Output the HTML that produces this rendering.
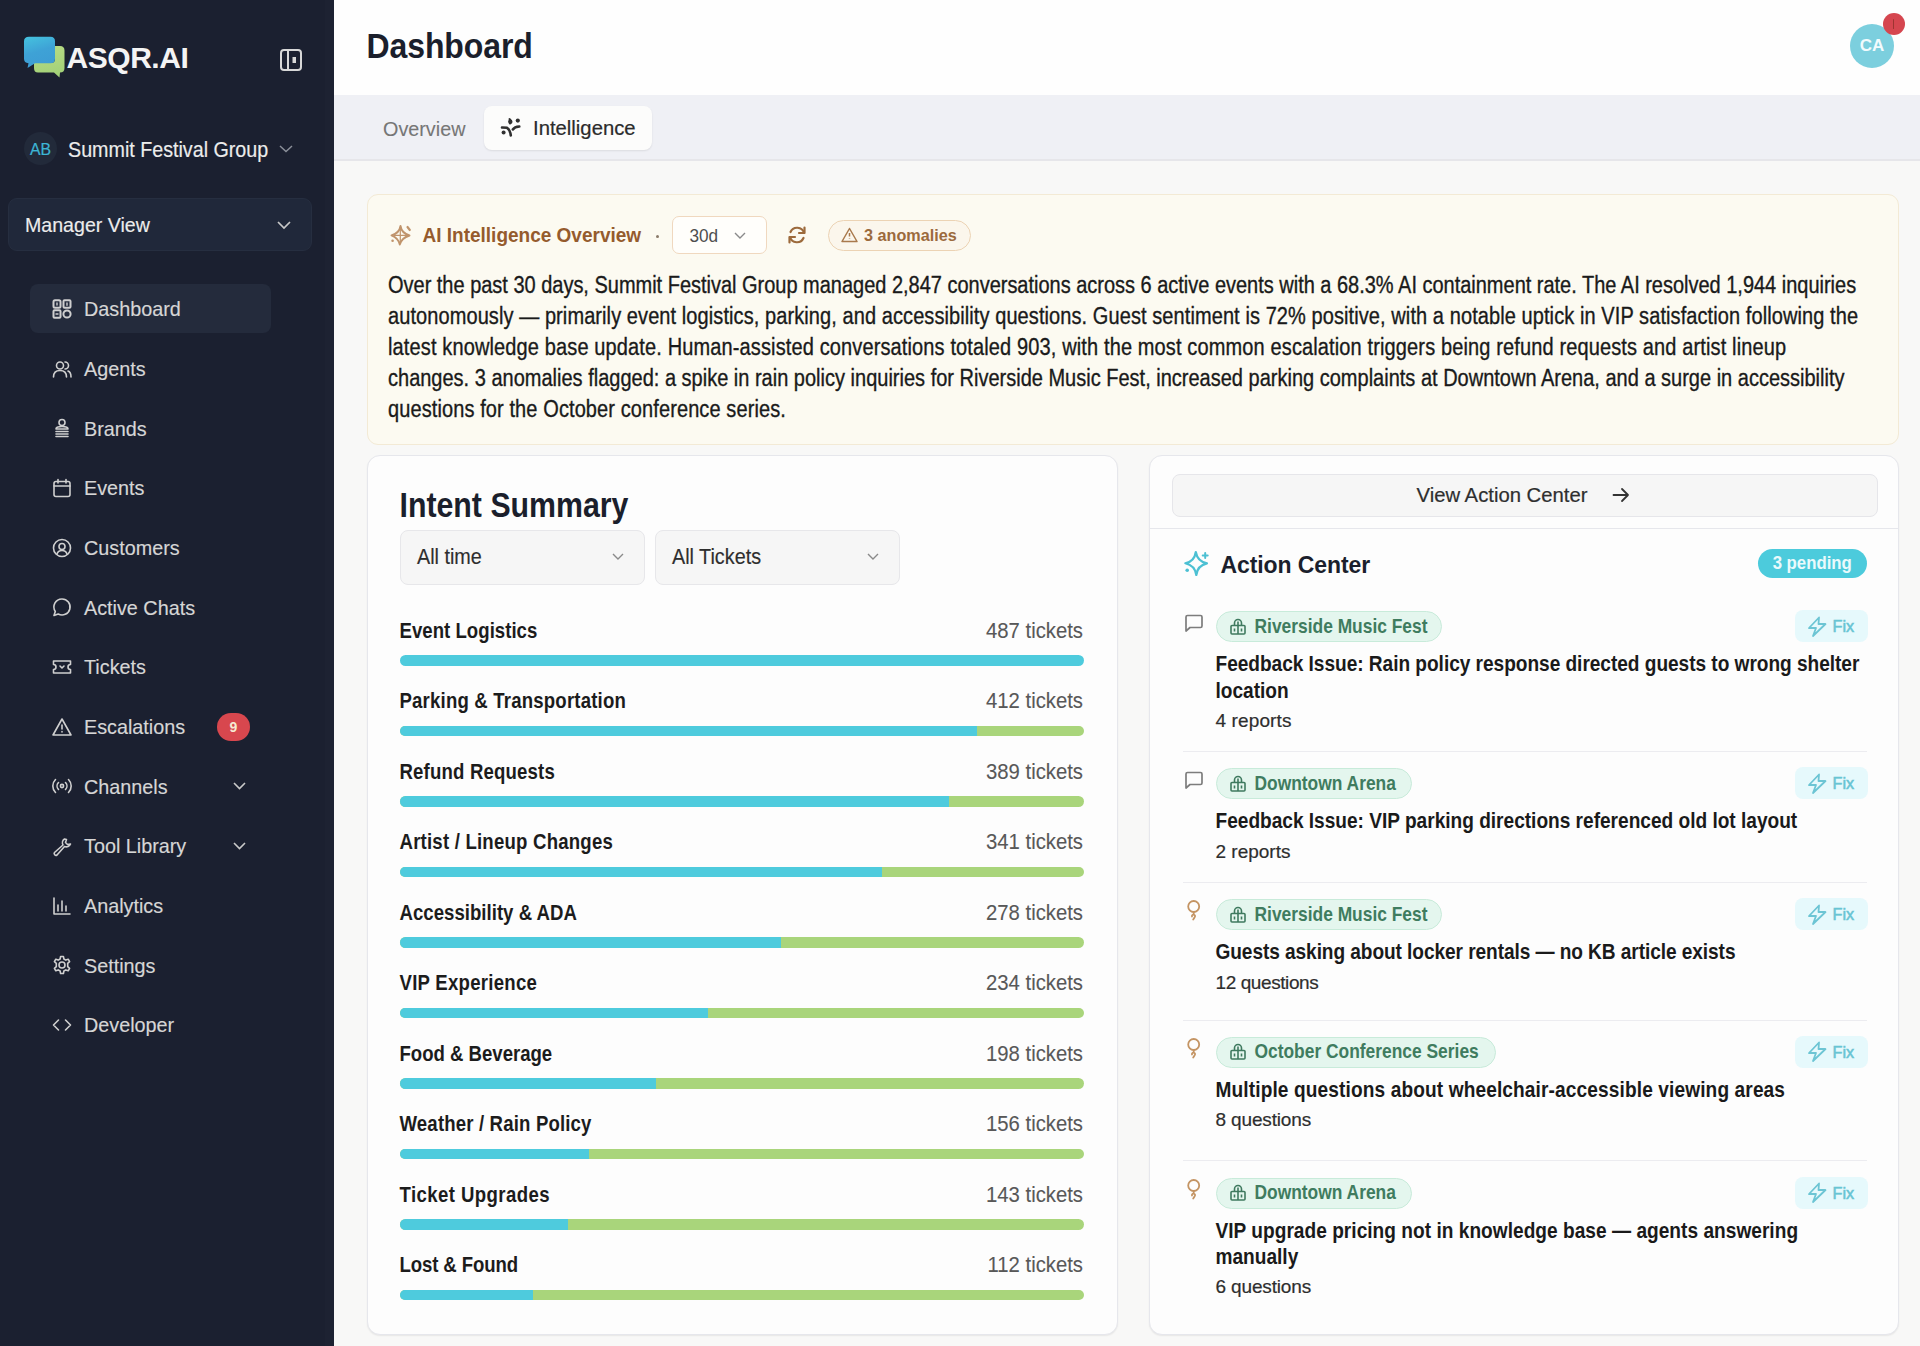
<!DOCTYPE html>
<html><head><meta charset="utf-8">
<style>
*{box-sizing:border-box;margin:0;padding:0}
html,body{width:1920px;height:1346px;overflow:hidden;background:#f8f8f7;font-family:"Liberation Sans",sans-serif}
.abs{position:absolute}
.t{position:absolute;white-space:nowrap}
svg{position:absolute;overflow:visible}
.nico{stroke:#cfcfcf;fill:none;stroke-width:1.6;stroke-linecap:round;stroke-linejoin:round}
</style></head><body>
<div class="abs" style="left:0px;top:0px;width:334px;height:1346px;background:#1b2030;border-radius:0px;"></div>
<div class="abs" style="left:325px;top:0px;width:9px;height:1346px;background:#1d2232;border-radius:0px;"></div>
<svg style="left:0;top:0" width="334" height="100">
  <defs><linearGradient id="gb" x1="0" y1="0" x2="0.3" y2="1"><stop offset="0" stop-color="#45c3df"/><stop offset="0.55" stop-color="#3ea2d6"/><stop offset="1" stop-color="#3d9dd4"/></linearGradient>
  <linearGradient id="gg" x1="0" y1="0" x2="0.2" y2="1"><stop offset="0" stop-color="#b9dc86"/><stop offset="1" stop-color="#a3d178"/></linearGradient></defs>
  <path d="M55 46 H60 Q64.5 46 64.5 50.5 V68 Q64.5 72.5 60 72.5 L59.5 77.5 L54 72.5 H38 Q34 72.5 34 68 V63 H51 Q55 63 55 59 Z" fill="url(#gg)"/>
  <path d="M29 36.8 H50.5 Q55 36.8 55 41.3 V58.8 Q55 63.3 50.5 63.3 H35 L27.5 68 L28.5 63.3 Q24 63 24 58.8 V41.3 Q24 36.8 29 36.8 Z" fill="url(#gb)"/>
</svg>
<div class="t" style="left:66.50px;top:42.90px;font-size:30px;color:#f4f4f4;line-height:30px;height:30px;font-weight:700;letter-spacing:-0.45px;">ASQR.AI</div>
<svg style="left:280px;top:49px" width="22" height="22" viewBox="0 0 22 22"><rect x="1" y="1" width="20" height="20" rx="3" fill="none" stroke="#d8d8d8" stroke-width="2"/><line x1="8" y1="1" x2="8" y2="21" stroke="#d8d8d8" stroke-width="2"/><rect x="12.5" y="8" width="3.5" height="6" fill="#d8d8d8"/></svg>
<div class="abs" style="left:24px;top:132px;width:33px;height:33px;background:#222a3a;border-radius:16.5px;"></div>
<div class="t" style="left:24.00px;top:134.52px;font-size:15.8px;color:#3db6d6;line-height:30px;height:30px;transform:scaleY(1.08);transform-origin:0 20.48px;width:33px;text-align:center;-webkit-text-stroke:0.2px #3db6d6;">AB</div>
<div class="t" style="left:68.00px;top:135.17px;font-size:19.7px;color:#ececec;line-height:30px;height:30px;transform:scaleY(1.09);transform-origin:0 21.83px;-webkit-text-stroke:0.15px #ececec;">Summit Festival Group</div>
<svg style="left:279px;top:145px" width="14" height="8" viewBox="0 0 14 8"><path d="M1 1 L7 6.5 L13 1" fill="none" stroke="#8b8f99" stroke-width="1.5"/></svg>
<div class="abs" style="left:8px;top:198px;width:304px;height:53px;background:#20283a;border-radius:9px;border:1px solid #262e40;"></div>
<div class="t" style="left:25.00px;top:210.20px;font-size:19.6px;color:#ececec;line-height:30px;height:30px;transform:scaleY(1.07);transform-origin:0 21.80px;-webkit-text-stroke:0.15px #ececec;">Manager View</div>
<svg style="left:277px;top:221px" width="14" height="8" viewBox="0 0 14 8"><path d="M1 1 L7 7 L13 1" fill="none" stroke="#c8c8c8" stroke-width="1.7"/></svg>
<div class="abs" style="left:30px;top:284px;width:241px;height:49px;background:#242b3c;border-radius:8px;"></div>
<svg class="nico" style="left:52px;top:299.0px" width="20" height="20" viewBox="0 0 20 20"><g stroke-width="2"><rect x="1.5" y="1.2" width="7" height="7.6" rx="1.5"/><rect x="11.5" y="1.2" width="7" height="7.6" rx="1"/><rect x="1.5" y="11.2" width="7" height="7.6" rx="1"/><circle cx="15" cy="15" r="3.6"/></g><path d="M5 4 V6 M15 4 V6.3 M4 15 H6" stroke-width="1.4"/></svg>
<div class="t" style="left:84.00px;top:294.39px;font-size:19.8px;color:#d6d6d6;line-height:30px;height:30px;-webkit-text-stroke:0.15px #d6d6d6;">Dashboard</div>
<svg class="nico" style="left:52px;top:358.7px" width="20" height="20" viewBox="0 0 20 20"><circle cx="8" cy="6.5" r="3.5"/><path d="M1.5 18 Q1.5 11.5 8 11.5 Q14.5 11.5 14.5 18"/><path d="M13 3 A3.5 3.5 0 0 1 13 10"/><path d="M16 12 Q19 13 19 18"/></svg>
<div class="t" style="left:84.00px;top:354.06px;font-size:19.8px;color:#d6d6d6;line-height:30px;height:30px;-webkit-text-stroke:0.15px #d6d6d6;">Agents</div>
<svg class="nico" style="left:52px;top:418.3px" width="20" height="20" viewBox="0 0 20 20"><circle cx="10" cy="4.5" r="3"/><path d="M4 11 Q4 8.5 10 8.5 Q16 8.5 16 11 Z"/><path d="M4 13.5 H16 M4 16 H16 M4 18.5 H16"/></svg>
<div class="t" style="left:84.00px;top:413.73px;font-size:19.8px;color:#d6d6d6;line-height:30px;height:30px;-webkit-text-stroke:0.15px #d6d6d6;">Brands</div>
<svg class="nico" style="left:52px;top:478.0px" width="20" height="20" viewBox="0 0 20 20"><rect x="2" y="3.5" width="16" height="15" rx="2"/><path d="M2 8 H18 M6 1.5 V5 M14 1.5 V5"/></svg>
<div class="t" style="left:84.00px;top:473.40px;font-size:19.8px;color:#d6d6d6;line-height:30px;height:30px;-webkit-text-stroke:0.15px #d6d6d6;">Events</div>
<svg class="nico" style="left:52px;top:537.7px" width="20" height="20" viewBox="0 0 20 20"><circle cx="10" cy="10" r="8.5"/><circle cx="10" cy="8.5" r="3"/><path d="M5 16 Q6 12.5 10 12.5 Q14 12.5 15 16"/></svg>
<div class="t" style="left:84.00px;top:533.07px;font-size:19.8px;color:#d6d6d6;line-height:30px;height:30px;-webkit-text-stroke:0.15px #d6d6d6;">Customers</div>
<svg class="nico" style="left:52px;top:597.4px" width="20" height="20" viewBox="0 0 20 20"><path d="M10 2 A8 8 0 1 1 6.2 17 L2 18.5 L3.3 14.5 A8 8 0 0 1 10 2 Z"/></svg>
<div class="t" style="left:84.00px;top:592.74px;font-size:19.8px;color:#d6d6d6;line-height:30px;height:30px;-webkit-text-stroke:0.15px #d6d6d6;">Active Chats</div>
<svg class="nico" style="left:52px;top:657.0px" width="20" height="20" viewBox="0 0 20 20"><path d="M1.5 4 H18.5 V7.5 A2.5 2.5 0 0 0 18.5 12.5 V16 H1.5 V12.5 A2.5 2.5 0 0 0 1.5 7.5 Z"/><path d="M8 9 L10 11 L12 9"/></svg>
<div class="t" style="left:84.00px;top:652.41px;font-size:19.8px;color:#d6d6d6;line-height:30px;height:30px;-webkit-text-stroke:0.15px #d6d6d6;">Tickets</div>
<svg class="nico" style="left:52px;top:716.7px" width="20" height="20" viewBox="0 0 20 20"><path d="M10 2 L19 18 H1 Z"/><path d="M10 8 V12 M10 14.5 V15"/></svg>
<div class="t" style="left:84.00px;top:712.08px;font-size:19.8px;color:#d6d6d6;line-height:30px;height:30px;-webkit-text-stroke:0.15px #d6d6d6;">Escalations</div>
<div class="abs" style="left:217px;top:712.7px;width:33px;height:28.0px;background:#d8474e;border-radius:14px;"></div>
<div class="t" style="left:217.00px;top:711.84px;font-size:14px;color:#f6ead2;line-height:30px;height:30px;font-weight:700;width:33px;text-align:center;">9</div>
<svg class="nico" style="left:52px;top:776.4px" width="20" height="20" viewBox="0 0 20 20"><circle cx="10" cy="10" r="1.6"/><path d="M6.5 6.5 A5 5 0 0 0 6.5 13.5 M13.5 6.5 A5 5 0 0 1 13.5 13.5 M3.5 3.5 A9.2 9.2 0 0 0 3.5 16.5 M16.5 3.5 A9.2 9.2 0 0 1 16.5 16.5"/></svg>
<div class="t" style="left:84.00px;top:771.75px;font-size:19.8px;color:#d6d6d6;line-height:30px;height:30px;-webkit-text-stroke:0.15px #d6d6d6;">Channels</div>
<svg style="left:232.5px;top:782.4px" width="13" height="8" viewBox="0 0 13 8"><path d="M1 1 L6.5 6.5 L12 1" fill="none" stroke="#c9c9c9" stroke-width="1.6"/></svg>
<svg class="nico" style="left:52px;top:836.0px" width="20" height="20" viewBox="0 0 20 20"><path d="M12.5 3 A4.5 4.5 0 0 0 11 9 L2.5 16.5 A1.8 1.8 0 0 0 5 19 L12.5 10.5 A4.5 4.5 0 0 0 18.5 8 L15.5 8.5 L13.5 6.5 L14.5 3.5 Z"/></svg>
<div class="t" style="left:84.00px;top:831.42px;font-size:19.8px;color:#d6d6d6;line-height:30px;height:30px;-webkit-text-stroke:0.15px #d6d6d6;">Tool Library</div>
<svg style="left:232.5px;top:842.0px" width="13" height="8" viewBox="0 0 13 8"><path d="M1 1 L6.5 6.5 L12 1" fill="none" stroke="#c9c9c9" stroke-width="1.6"/></svg>
<svg class="nico" style="left:52px;top:895.7px" width="20" height="20" viewBox="0 0 20 20"><path d="M2 2 V18 H18 M6 15 V9 M10 15 V5 M14 15 V10"/></svg>
<div class="t" style="left:84.00px;top:891.09px;font-size:19.8px;color:#d6d6d6;line-height:30px;height:30px;-webkit-text-stroke:0.15px #d6d6d6;">Analytics</div>
<svg class="nico" style="left:52px;top:955.4px" width="20" height="20" viewBox="0 0 20 20"><circle cx="10" cy="10" r="3"/><path d="M8.6 1.5 H11.4 L11.9 4 L13.8 5.1 L16.2 4.2 L17.6 6.6 L15.7 8.3 V11.7 L17.6 13.4 L16.2 15.8 L13.8 14.9 L11.9 16 L11.4 18.5 H8.6 L8.1 16 L6.2 14.9 L3.8 15.8 L2.4 13.4 L4.3 11.7 V8.3 L2.4 6.6 L3.8 4.2 L6.2 5.1 L8.1 4 Z"/></svg>
<div class="t" style="left:84.00px;top:950.76px;font-size:19.8px;color:#d6d6d6;line-height:30px;height:30px;-webkit-text-stroke:0.15px #d6d6d6;">Settings</div>
<svg class="nico" style="left:52px;top:1015.0px" width="20" height="20" viewBox="0 0 20 20"><path d="M6.5 5 L1.5 10 L6.5 15 M13.5 5 L18.5 10 L13.5 15"/></svg>
<div class="t" style="left:84.00px;top:1010.43px;font-size:19.8px;color:#d6d6d6;line-height:30px;height:30px;-webkit-text-stroke:0.15px #d6d6d6;">Developer</div>
<div class="abs" style="left:334px;top:0px;width:1586px;height:95px;background:#fefefe;border-radius:0px;"></div>
<div class="t" style="left:366.50px;top:31.91px;font-size:32px;color:#1b1f2c;line-height:30px;height:30px;font-weight:700;letter-spacing:-0.1px;transform:scaleY(1.08);transform-origin:0 26.09px;">Dashboard</div>
<div class="abs" style="left:1850px;top:23.5px;width:44px;height:44.0px;background:#7ccfde;border-radius:22px;"></div>
<div class="t" style="left:1850.00px;top:31.11px;font-size:17px;color:#f2fbfd;line-height:30px;height:30px;font-weight:700;width:44px;text-align:center;">CA</div>
<div class="abs" style="left:1883px;top:13px;width:21.5px;height:21.5px;background:#d5464f;border-radius:11px;"></div>
<div class="abs" style="left:1892.8px;top:18.5px;width:1.5px;height:10.0px;background:rgba(120,40,30,0.6);border-radius:1px;"></div>
<div class="abs" style="left:334px;top:95px;width:1586px;height:65px;background:#eff0f5;border-radius:0px;"></div>
<div class="abs" style="left:334px;top:159px;width:1586px;height:1.5px;background:#e6e6ea;border-radius:0px;"></div>
<div class="t" style="left:383.00px;top:113.54px;font-size:19.8px;color:#767676;line-height:30px;height:30px;-webkit-text-stroke:0.1px #767676;">Overview</div>
<div class="abs" style="left:484px;top:106px;width:168px;height:44px;background:#fcfcfb;border-radius:8px;box-shadow:0 1px 2px rgba(0,0,0,0.09);"></div>
<svg style="left:495px;top:112px" width="30" height="30" viewBox="495 112 30 30" fill="none" stroke="#303030" stroke-width="2.6" stroke-linecap="round"><circle cx="510.3" cy="121.8" r="2.2" fill="#303030" stroke="none"/><path d="M509.5 119 Q511.5 120.5 510 123.5" stroke-width="2"/><circle cx="517.8" cy="120.6" r="2.1" fill="#303030" stroke="none"/><path d="M502 127.5 L507 127.8 Q510 129.5 510.8 135.5"/><path d="M512.8 129.5 Q514.5 126.8 519.3 126.5"/><circle cx="503.6" cy="132.6" r="2" fill="#303030" stroke="none"/></svg>
<div class="t" style="left:533.00px;top:113.36px;font-size:20.3px;color:#2b2b2b;line-height:30px;height:30px;transform:scaleY(1.04);transform-origin:0 22.04px;-webkit-text-stroke:0.2px #2b2b2b;">Intelligence</div>
<div class="abs" style="left:367px;top:194px;width:1532px;height:250.5px;background:#fcfaf1;border-radius:11px;border:1px solid #f3ead5;"></div>
<svg style="left:385px;top:220px" width="30" height="30" viewBox="385 220 30 30" fill="none" stroke="#c0946c" stroke-width="1.9" stroke-linejoin="round" stroke-linecap="round"><path d="M400.5 226 Q401.5 233 409.5 235.5 Q401.5 238 399.8 244.5 Q398.5 238 391.5 235.3 Q399.5 233 400.5 226 Z"/><path d="M400.3 229 V243 M394 235.4 H407" stroke-width="1.2"/><path d="M407.5 227 L409.8 230" stroke-width="2.2"/><circle cx="392.6" cy="240.8" r="1.3" fill="#c0946c" stroke="none"/></svg>
<div class="t" style="left:422.50px;top:220.71px;font-size:19px;color:#955b2d;line-height:30px;height:30px;font-weight:700;transform:scaleY(1.05);transform-origin:0 21.59px;">AI Intelligence Overview</div>
<div class="abs" style="left:655.5px;top:235px;width:3.0px;height:3px;background:#8a7a6a;border-radius:2px;"></div>
<div class="abs" style="left:672px;top:216px;width:95px;height:38px;background:#fffefb;border-radius:7px;border:1px solid #f0d8bf;"></div>
<div class="t" style="left:689.50px;top:220.64px;font-size:17.2px;color:#4e4e4e;line-height:30px;height:30px;transform:scaleY(1.05);transform-origin:0 20.96px;">30d</div>
<svg style="left:733.5px;top:232px" width="12" height="7" viewBox="0 0 12 7"><path d="M1 1 L6 6 L11 1" fill="none" stroke="#8a8a8a" stroke-width="1.4"/></svg>
<svg style="left:787px;top:225px" width="20" height="20" viewBox="0 0 20 20" fill="none" stroke="#9c6a3c" stroke-width="2.2" stroke-linecap="round" stroke-linejoin="round"><path d="M17 8 A7.2 7.2 0 0 0 3.5 7"/><path d="M17.5 2.5 V8 H12"/><path d="M3 12 A7.2 7.2 0 0 0 16.5 13"/><path d="M2.5 17.5 V12 H8"/></svg>
<div class="abs" style="left:827.5px;top:220px;width:143.5px;height:30.5px;background:#fbf6ec;border-radius:16px;border:1.5px solid #ecd3b4;"></div>
<svg style="left:841px;top:227px" width="17" height="16" viewBox="0 0 17 16" fill="none" stroke="#a9794c" stroke-width="1.5" stroke-linejoin="round"><path d="M8.5 1.5 L16 14.5 H1 Z"/><path d="M8.5 6 V9.5 M8.5 11.5 V12"/></svg>
<div class="t" style="left:864.00px;top:219.88px;font-size:16.2px;color:#9b6a3d;line-height:30px;height:30px;font-weight:700;transform:scaleY(1.05);transform-origin:0 20.62px;">3 anomalies</div>
<div class="t" style="left:388.00px;top:271.07px;font-size:20px;color:#1a1a1a;line-height:30px;height:30px;letter-spacing:-0.0143px;transform:scaleY(1.15);transform-origin:0 21.93px;-webkit-text-stroke:0.3px #1a1a1a;">Over the past 30 days, Summit Festival Group managed 2,847 conversations across 6 active events with a 68.3% AI containment rate. The AI resolved 1,944 inquiries</div>
<div class="t" style="left:388.00px;top:302.10px;font-size:20px;color:#1a1a1a;line-height:30px;height:30px;letter-spacing:0.0844px;transform:scaleY(1.15);transform-origin:0 21.93px;-webkit-text-stroke:0.3px #1a1a1a;">autonomously — primarily event logistics, parking, and accessibility questions. Guest sentiment is 72% positive, with a notable uptick in VIP satisfaction following the</div>
<div class="t" style="left:388.00px;top:333.13px;font-size:20px;color:#1a1a1a;line-height:30px;height:30px;letter-spacing:0.1295px;transform:scaleY(1.15);transform-origin:0 21.93px;-webkit-text-stroke:0.3px #1a1a1a;">latest knowledge base update. Human-assisted conversations totaled 903, with the most common escalation triggers being refund requests and artist lineup</div>
<div class="t" style="left:388.00px;top:364.16px;font-size:20px;color:#1a1a1a;line-height:30px;height:30px;letter-spacing:0.0014px;transform:scaleY(1.15);transform-origin:0 21.93px;-webkit-text-stroke:0.3px #1a1a1a;">changes. 3 anomalies flagged: a spike in rain policy inquiries for Riverside Music Fest, increased parking complaints at Downtown Arena, and a surge in accessibility</div>
<div class="t" style="left:388.00px;top:395.19px;font-size:20px;color:#1a1a1a;line-height:30px;height:30px;letter-spacing:0.0999px;transform:scaleY(1.15);transform-origin:0 21.93px;-webkit-text-stroke:0.3px #1a1a1a;">questions for the October conference series.</div>
<div class="abs" style="left:367px;top:455px;width:750.5px;height:879.5px;background:#fdfdfd;border-radius:13px;border:1px solid #e6e7ec;box-shadow:0 1px 1.5px rgba(0,0,0,0.07);"></div>
<div class="t" style="left:399.50px;top:492.19px;font-size:30.3px;color:#1b1f2c;line-height:30px;height:30px;font-weight:700;transform:scaleY(1.17);transform-origin:0 25.51px;">Intent Summary</div>
<div class="abs" style="left:400px;top:530px;width:245px;height:54.5px;background:#f6f6f6;border-radius:8px;border:1px solid #e7e7ea;"></div>
<div class="t" style="left:417.00px;top:542.14px;font-size:19.8px;color:#2e2e2e;line-height:30px;height:30px;transform:scaleY(1.07);transform-origin:0 21.86px;-webkit-text-stroke:0.15px #2e2e2e;">All time</div>
<svg style="left:611.5px;top:553px" width="12" height="7" viewBox="0 0 12 7"><path d="M1 1 L6 6 L11 1" fill="none" stroke="#8a8a8a" stroke-width="1.4"/></svg>
<div class="abs" style="left:655px;top:530px;width:245px;height:54.5px;background:#f6f6f6;border-radius:8px;border:1px solid #e7e7ea;"></div>
<div class="t" style="left:672.00px;top:542.14px;font-size:19.8px;color:#2e2e2e;line-height:30px;height:30px;transform:scaleY(1.07);transform-origin:0 21.86px;-webkit-text-stroke:0.15px #2e2e2e;">All Tickets</div>
<svg style="left:866.5px;top:553px" width="12" height="7" viewBox="0 0 12 7"><path d="M1 1 L6 6 L11 1" fill="none" stroke="#8a8a8a" stroke-width="1.4"/></svg>
<div class="t" style="left:399.50px;top:616.85px;font-size:18.6px;color:#1c1c1c;line-height:30px;height:30px;font-weight:700;letter-spacing:0.0286px;transform:scaleY(1.2);transform-origin:0 21.45px;">Event Logistics</div>
<div class="t" style="left:883.00px;top:615.86px;font-size:20.3px;color:#585858;line-height:30px;height:30px;transform:scaleY(1.1);transform-origin:0 22.04px;width:200px;text-align:right;-webkit-text-stroke:0.1px #585858;">487 tickets</div>
<div class="abs" style="left:400px;top:655.20px;width:684px;height:10.5px;border-radius:6px;background:#a9d57b;overflow:hidden"><div style="width:100%;height:100%;background:#4ecbdd"></div></div>
<div class="t" style="left:399.50px;top:687.35px;font-size:18.6px;color:#1c1c1c;line-height:30px;height:30px;font-weight:700;letter-spacing:0.1826px;transform:scaleY(1.2);transform-origin:0 21.45px;">Parking &amp; Transportation</div>
<div class="t" style="left:883.00px;top:686.36px;font-size:20.3px;color:#585858;line-height:30px;height:30px;transform:scaleY(1.1);transform-origin:0 22.04px;width:200px;text-align:right;-webkit-text-stroke:0.1px #585858;">412 tickets</div>
<div class="abs" style="left:400px;top:725.70px;width:684px;height:10.5px;border-radius:6px;background:#a9d57b;overflow:hidden"><div style="width:84.3%;height:100%;background:#4ecbdd"></div></div>
<div class="t" style="left:399.50px;top:757.85px;font-size:18.6px;color:#1c1c1c;line-height:30px;height:30px;font-weight:700;letter-spacing:0.1716px;transform:scaleY(1.2);transform-origin:0 21.45px;">Refund Requests</div>
<div class="t" style="left:883.00px;top:756.86px;font-size:20.3px;color:#585858;line-height:30px;height:30px;transform:scaleY(1.1);transform-origin:0 22.04px;width:200px;text-align:right;-webkit-text-stroke:0.1px #585858;">389 tickets</div>
<div class="abs" style="left:400px;top:796.20px;width:684px;height:10.5px;border-radius:6px;background:#a9d57b;overflow:hidden"><div style="width:80.2%;height:100%;background:#4ecbdd"></div></div>
<div class="t" style="left:399.50px;top:828.35px;font-size:18.6px;color:#1c1c1c;line-height:30px;height:30px;font-weight:700;letter-spacing:0.2089px;transform:scaleY(1.2);transform-origin:0 21.45px;">Artist / Lineup Changes</div>
<div class="t" style="left:883.00px;top:827.36px;font-size:20.3px;color:#585858;line-height:30px;height:30px;transform:scaleY(1.1);transform-origin:0 22.04px;width:200px;text-align:right;-webkit-text-stroke:0.1px #585858;">341 tickets</div>
<div class="abs" style="left:400px;top:866.70px;width:684px;height:10.5px;border-radius:6px;background:#a9d57b;overflow:hidden"><div style="width:70.4%;height:100%;background:#4ecbdd"></div></div>
<div class="t" style="left:399.50px;top:898.85px;font-size:18.6px;color:#1c1c1c;line-height:30px;height:30px;font-weight:700;letter-spacing:0.0222px;transform:scaleY(1.2);transform-origin:0 21.45px;">Accessibility &amp; ADA</div>
<div class="t" style="left:883.00px;top:897.86px;font-size:20.3px;color:#585858;line-height:30px;height:30px;transform:scaleY(1.1);transform-origin:0 22.04px;width:200px;text-align:right;-webkit-text-stroke:0.1px #585858;">278 tickets</div>
<div class="abs" style="left:400px;top:937.20px;width:684px;height:10.5px;border-radius:6px;background:#a9d57b;overflow:hidden"><div style="width:55.7%;height:100%;background:#4ecbdd"></div></div>
<div class="t" style="left:399.50px;top:969.35px;font-size:18.6px;color:#1c1c1c;line-height:30px;height:30px;font-weight:700;letter-spacing:0.2615px;transform:scaleY(1.2);transform-origin:0 21.45px;">VIP Experience</div>
<div class="t" style="left:883.00px;top:968.36px;font-size:20.3px;color:#585858;line-height:30px;height:30px;transform:scaleY(1.1);transform-origin:0 22.04px;width:200px;text-align:right;-webkit-text-stroke:0.1px #585858;">234 tickets</div>
<div class="abs" style="left:400px;top:1007.70px;width:684px;height:10.5px;border-radius:6px;background:#a9d57b;overflow:hidden"><div style="width:45.1%;height:100%;background:#4ecbdd"></div></div>
<div class="t" style="left:399.50px;top:1039.85px;font-size:18.6px;color:#1c1c1c;line-height:30px;height:30px;font-weight:700;letter-spacing:-0.0144px;transform:scaleY(1.2);transform-origin:0 21.45px;">Food &amp; Beverage</div>
<div class="t" style="left:883.00px;top:1038.86px;font-size:20.3px;color:#585858;line-height:30px;height:30px;transform:scaleY(1.1);transform-origin:0 22.04px;width:200px;text-align:right;-webkit-text-stroke:0.1px #585858;">198 tickets</div>
<div class="abs" style="left:400px;top:1078.20px;width:684px;height:10.5px;border-radius:6px;background:#a9d57b;overflow:hidden"><div style="width:37.4%;height:100%;background:#4ecbdd"></div></div>
<div class="t" style="left:399.50px;top:1110.35px;font-size:18.6px;color:#1c1c1c;line-height:30px;height:30px;font-weight:700;letter-spacing:0.16px;transform:scaleY(1.2);transform-origin:0 21.45px;">Weather / Rain Policy</div>
<div class="t" style="left:883.00px;top:1109.36px;font-size:20.3px;color:#585858;line-height:30px;height:30px;transform:scaleY(1.1);transform-origin:0 22.04px;width:200px;text-align:right;-webkit-text-stroke:0.1px #585858;">156 tickets</div>
<div class="abs" style="left:400px;top:1148.70px;width:684px;height:10.5px;border-radius:6px;background:#a9d57b;overflow:hidden"><div style="width:27.6%;height:100%;background:#4ecbdd"></div></div>
<div class="t" style="left:399.50px;top:1180.85px;font-size:18.6px;color:#1c1c1c;line-height:30px;height:30px;font-weight:700;letter-spacing:0.4142px;transform:scaleY(1.2);transform-origin:0 21.45px;">Ticket Upgrades</div>
<div class="t" style="left:883.00px;top:1179.86px;font-size:20.3px;color:#585858;line-height:30px;height:30px;transform:scaleY(1.1);transform-origin:0 22.04px;width:200px;text-align:right;-webkit-text-stroke:0.1px #585858;">143 tickets</div>
<div class="abs" style="left:400px;top:1219.20px;width:684px;height:10.5px;border-radius:6px;background:#a9d57b;overflow:hidden"><div style="width:24.6%;height:100%;background:#4ecbdd"></div></div>
<div class="t" style="left:399.50px;top:1251.35px;font-size:18.6px;color:#1c1c1c;line-height:30px;height:30px;font-weight:700;letter-spacing:-0.1089px;transform:scaleY(1.2);transform-origin:0 21.45px;">Lost &amp; Found</div>
<div class="t" style="left:883.00px;top:1250.36px;font-size:20.3px;color:#585858;line-height:30px;height:30px;transform:scaleY(1.1);transform-origin:0 22.04px;width:200px;text-align:right;-webkit-text-stroke:0.1px #585858;">112 tickets</div>
<div class="abs" style="left:400px;top:1289.70px;width:684px;height:10.5px;border-radius:6px;background:#a9d57b;overflow:hidden"><div style="width:19.4%;height:100%;background:#4ecbdd"></div></div>
<div class="abs" style="left:1149px;top:455px;width:750px;height:879.5px;background:#fdfdfd;border-radius:13px;border:1px solid #e6e7ec;box-shadow:0 1px 1.5px rgba(0,0,0,0.07);"></div>
<div class="abs" style="left:1172px;top:473.5px;width:705.5px;height:43.0px;background:#f6f6f6;border-radius:8px;border:1px solid #e6e6ea;"></div>
<div class="t" style="left:1416.50px;top:479.96px;font-size:20.3px;color:#2e2e2e;line-height:30px;height:30px;-webkit-text-stroke:0.2px #2e2e2e;">View Action Center</div>
<svg style="left:1612px;top:486.5px" width="18" height="16" viewBox="0 0 18 16" fill="none" stroke="#333" stroke-width="1.8" stroke-linecap="round" stroke-linejoin="round"><path d="M1.5 8 H16 M10 2 L16 8 L10 14"/></svg>
<div class="abs" style="left:1149px;top:527.5px;width:750px;height:1.0px;background:#e6e7ec;border-radius:0px;"></div>
<svg style="left:1180px;top:545px" width="32" height="35" viewBox="1180 545 32 35" fill="none" stroke="#4cc0d3" stroke-width="2.2" stroke-linejoin="round" stroke-linecap="round"><path d="M1195.8 552 Q1197.5 561.5 1207 563.4 Q1197.5 565.5 1196.3 575 Q1195 565.5 1185.3 563.3 Q1194.5 561.5 1195.8 552 Z"/><path d="M1205.2 553 V558 M1202.7 555.5 H1207.7" stroke-width="2"/><circle cx="1187.2" cy="570.3" r="1.8" fill="#4cc0d3" stroke="none"/></svg>
<div class="t" style="left:1220.50px;top:549.53px;font-size:23px;color:#1b1f2c;line-height:30px;height:30px;font-weight:700;letter-spacing:-0.1px;transform:scaleY(1.03);transform-origin:0 22.97px;">Action Center</div>
<div class="abs" style="left:1758px;top:549px;width:108.5px;height:28.5px;background:#4ccbdc;border-radius:15px;"></div>
<div class="t" style="left:1758.00px;top:548.78px;font-size:16.8px;color:#eafafc;line-height:30px;height:30px;font-weight:700;transform:scaleY(1.05);transform-origin:0 20.82px;width:108.5px;text-align:center;">3 pending</div>
<svg style="left:1184px;top:613.5px" width="20" height="20" viewBox="0 0 20 20" fill="none" stroke="#7d7d7d" stroke-width="1.7" stroke-linejoin="round"><path d="M3.5 1.5 H16.5 Q18 1.5 18 3 V12 Q18 13.5 16.5 13.5 H6 L2 17 V3 Q2 1.5 3.5 1.5 Z"/></svg>
<div class="abs" style="left:1216px;top:611px;width:226px;height:31px;background:#e4f6ee;border-radius:16px;border:1px solid #c8ebda;"></div>
<svg style="left:1230px;top:617.5px" width="16" height="17" viewBox="0 0 16 17" fill="none" stroke="#3f7a5f" stroke-width="1.6" stroke-linejoin="round"><path d="M4.5 7 V5 A3.5 3.5 0 0 1 11.5 5 V7"/><rect x="1" y="7.5" width="14" height="8.5" rx="1"/><path d="M8 3.5 V16 M4.5 10.5 V13.5 M11.5 10.5 V13.5"/></svg>
<div class="t" style="left:1254.50px;top:611.97px;font-size:17.4px;color:#3f7c5f;line-height:30px;height:30px;font-weight:700;transform:scaleY(1.15);transform-origin:0 21.03px;">Riverside Music Fest</div>
<div class="abs" style="left:1795px;top:610px;width:73px;height:32px;background:#e6f9fc;border-radius:8px;"></div>
<svg style="left:1806.5px;top:615.5px" width="20" height="21" viewBox="0 0 20 21" fill="none" stroke="#6cc5d4" stroke-width="1.8" stroke-linejoin="round"><path d="M12 1.5 L2 12 H9 L6 20 L18.5 8 H11.5 Z"/></svg>
<div class="t" style="left:1832.50px;top:611.25px;font-size:16.3px;color:#68c4d3;line-height:30px;height:30px;transform:scaleY(1.05);transform-origin:0 20.65px;-webkit-text-stroke:0.5px #68c4d3;">Fix</div>
<div class="t" style="left:1215.50px;top:650.38px;font-size:19.1px;color:#1a1a1a;line-height:30px;height:30px;font-weight:700;letter-spacing:-0.0339px;transform:scaleY(1.13);transform-origin:0 21.62px;">Feedback Issue: Rain policy response directed guests to wrong shelter</div>
<div class="t" style="left:1215.50px;top:676.68px;font-size:19.1px;color:#1a1a1a;line-height:30px;height:30px;font-weight:700;transform:scaleY(1.13);transform-origin:0 21.62px;">location</div>
<div class="t" style="left:1215.50px;top:705.91px;font-size:19px;color:#2e2e2e;line-height:30px;height:30px;letter-spacing:0.125px;-webkit-text-stroke:0.2px #2e2e2e;">4 reports</div>
<div class="abs" style="left:1183px;top:751px;width:684px;height:1px;background:#ececf0;border-radius:0px;"></div>
<svg style="left:1184px;top:770.5px" width="20" height="20" viewBox="0 0 20 20" fill="none" stroke="#7d7d7d" stroke-width="1.7" stroke-linejoin="round"><path d="M3.5 1.5 H16.5 Q18 1.5 18 3 V12 Q18 13.5 16.5 13.5 H6 L2 17 V3 Q2 1.5 3.5 1.5 Z"/></svg>
<div class="abs" style="left:1216px;top:768px;width:195.5px;height:31px;background:#e4f6ee;border-radius:16px;border:1px solid #c8ebda;"></div>
<svg style="left:1230px;top:774.5px" width="16" height="17" viewBox="0 0 16 17" fill="none" stroke="#3f7a5f" stroke-width="1.6" stroke-linejoin="round"><path d="M4.5 7 V5 A3.5 3.5 0 0 1 11.5 5 V7"/><rect x="1" y="7.5" width="14" height="8.5" rx="1"/><path d="M8 3.5 V16 M4.5 10.5 V13.5 M11.5 10.5 V13.5"/></svg>
<div class="t" style="left:1254.50px;top:768.97px;font-size:17.4px;color:#3f7c5f;line-height:30px;height:30px;font-weight:700;transform:scaleY(1.15);transform-origin:0 21.03px;">Downtown Arena</div>
<div class="abs" style="left:1795px;top:767px;width:73px;height:32px;background:#e6f9fc;border-radius:8px;"></div>
<svg style="left:1806.5px;top:772.5px" width="20" height="21" viewBox="0 0 20 21" fill="none" stroke="#6cc5d4" stroke-width="1.8" stroke-linejoin="round"><path d="M12 1.5 L2 12 H9 L6 20 L18.5 8 H11.5 Z"/></svg>
<div class="t" style="left:1832.50px;top:768.25px;font-size:16.3px;color:#68c4d3;line-height:30px;height:30px;transform:scaleY(1.05);transform-origin:0 20.65px;-webkit-text-stroke:0.5px #68c4d3;">Fix</div>
<div class="t" style="left:1215.50px;top:807.38px;font-size:19.1px;color:#1a1a1a;line-height:30px;height:30px;font-weight:700;letter-spacing:-0.0079px;transform:scaleY(1.13);transform-origin:0 21.62px;">Feedback Issue: VIP parking directions referenced old lot layout</div>
<div class="t" style="left:1215.50px;top:836.61px;font-size:19px;color:#2e2e2e;line-height:30px;height:30px;-webkit-text-stroke:0.2px #2e2e2e;">2 reports</div>
<div class="abs" style="left:1183px;top:882px;width:684px;height:1px;background:#ececf0;border-radius:0px;"></div>
<svg style="left:1184px;top:900px" width="20" height="24" viewBox="0 0 20 24" fill="none" stroke="#c49463" stroke-width="1.8" stroke-linecap="round" stroke-linejoin="round"><circle cx="9.7" cy="6.5" r="5.5"/><path d="M9.7 12 V14.5 Q12 15.5 10.5 17.5 L9.2 19.5 M8 16.5 Q7.5 15 9.7 14.5"/></svg>
<div class="abs" style="left:1216px;top:899px;width:226px;height:31px;background:#e4f6ee;border-radius:16px;border:1px solid #c8ebda;"></div>
<svg style="left:1230px;top:905.5px" width="16" height="17" viewBox="0 0 16 17" fill="none" stroke="#3f7a5f" stroke-width="1.6" stroke-linejoin="round"><path d="M4.5 7 V5 A3.5 3.5 0 0 1 11.5 5 V7"/><rect x="1" y="7.5" width="14" height="8.5" rx="1"/><path d="M8 3.5 V16 M4.5 10.5 V13.5 M11.5 10.5 V13.5"/></svg>
<div class="t" style="left:1254.50px;top:899.97px;font-size:17.4px;color:#3f7c5f;line-height:30px;height:30px;font-weight:700;transform:scaleY(1.15);transform-origin:0 21.03px;">Riverside Music Fest</div>
<div class="abs" style="left:1795px;top:898px;width:73px;height:32px;background:#e6f9fc;border-radius:8px;"></div>
<svg style="left:1806.5px;top:903.5px" width="20" height="21" viewBox="0 0 20 21" fill="none" stroke="#6cc5d4" stroke-width="1.8" stroke-linejoin="round"><path d="M12 1.5 L2 12 H9 L6 20 L18.5 8 H11.5 Z"/></svg>
<div class="t" style="left:1832.50px;top:899.25px;font-size:16.3px;color:#68c4d3;line-height:30px;height:30px;transform:scaleY(1.05);transform-origin:0 20.65px;-webkit-text-stroke:0.5px #68c4d3;">Fix</div>
<div class="t" style="left:1215.50px;top:938.38px;font-size:19.1px;color:#1a1a1a;line-height:30px;height:30px;font-weight:700;letter-spacing:-0.0749px;transform:scaleY(1.13);transform-origin:0 21.62px;">Guests asking about locker rentals — no KB article exists</div>
<div class="t" style="left:1215.50px;top:967.61px;font-size:19px;color:#2e2e2e;line-height:30px;height:30px;letter-spacing:-0.4091px;-webkit-text-stroke:0.2px #2e2e2e;">12 questions</div>
<div class="abs" style="left:1183px;top:1019.5px;width:684px;height:1.0px;background:#ececf0;border-radius:0px;"></div>
<svg style="left:1184px;top:1037.5px" width="20" height="24" viewBox="0 0 20 24" fill="none" stroke="#c49463" stroke-width="1.8" stroke-linecap="round" stroke-linejoin="round"><circle cx="9.7" cy="6.5" r="5.5"/><path d="M9.7 12 V14.5 Q12 15.5 10.5 17.5 L9.2 19.5 M8 16.5 Q7.5 15 9.7 14.5"/></svg>
<div class="abs" style="left:1216px;top:1036.5px;width:279.5px;height:31.0px;background:#e4f6ee;border-radius:16px;border:1px solid #c8ebda;"></div>
<svg style="left:1230px;top:1043.0px" width="16" height="17" viewBox="0 0 16 17" fill="none" stroke="#3f7a5f" stroke-width="1.6" stroke-linejoin="round"><path d="M4.5 7 V5 A3.5 3.5 0 0 1 11.5 5 V7"/><rect x="1" y="7.5" width="14" height="8.5" rx="1"/><path d="M8 3.5 V16 M4.5 10.5 V13.5 M11.5 10.5 V13.5"/></svg>
<div class="t" style="left:1254.50px;top:1037.47px;font-size:17.4px;color:#3f7c5f;line-height:30px;height:30px;font-weight:700;transform:scaleY(1.15);transform-origin:0 21.03px;">October Conference Series</div>
<div class="abs" style="left:1795px;top:1035.5px;width:73px;height:32.0px;background:#e6f9fc;border-radius:8px;"></div>
<svg style="left:1806.5px;top:1041.0px" width="20" height="21" viewBox="0 0 20 21" fill="none" stroke="#6cc5d4" stroke-width="1.8" stroke-linejoin="round"><path d="M12 1.5 L2 12 H9 L6 20 L18.5 8 H11.5 Z"/></svg>
<div class="t" style="left:1832.50px;top:1036.75px;font-size:16.3px;color:#68c4d3;line-height:30px;height:30px;transform:scaleY(1.05);transform-origin:0 20.65px;-webkit-text-stroke:0.5px #68c4d3;">Fix</div>
<div class="t" style="left:1215.50px;top:1075.88px;font-size:19.1px;color:#1a1a1a;line-height:30px;height:30px;font-weight:700;letter-spacing:0.1203px;transform:scaleY(1.13);transform-origin:0 21.62px;">Multiple questions about wheelchair-accessible viewing areas</div>
<div class="t" style="left:1215.50px;top:1105.11px;font-size:19px;color:#2e2e2e;line-height:30px;height:30px;letter-spacing:-0.15px;-webkit-text-stroke:0.2px #2e2e2e;">8 questions</div>
<div class="abs" style="left:1183px;top:1160px;width:684px;height:1px;background:#ececf0;border-radius:0px;"></div>
<svg style="left:1184px;top:1178.5px" width="20" height="24" viewBox="0 0 20 24" fill="none" stroke="#c49463" stroke-width="1.8" stroke-linecap="round" stroke-linejoin="round"><circle cx="9.7" cy="6.5" r="5.5"/><path d="M9.7 12 V14.5 Q12 15.5 10.5 17.5 L9.2 19.5 M8 16.5 Q7.5 15 9.7 14.5"/></svg>
<div class="abs" style="left:1216px;top:1177.5px;width:195.5px;height:31.0px;background:#e4f6ee;border-radius:16px;border:1px solid #c8ebda;"></div>
<svg style="left:1230px;top:1184.0px" width="16" height="17" viewBox="0 0 16 17" fill="none" stroke="#3f7a5f" stroke-width="1.6" stroke-linejoin="round"><path d="M4.5 7 V5 A3.5 3.5 0 0 1 11.5 5 V7"/><rect x="1" y="7.5" width="14" height="8.5" rx="1"/><path d="M8 3.5 V16 M4.5 10.5 V13.5 M11.5 10.5 V13.5"/></svg>
<div class="t" style="left:1254.50px;top:1178.47px;font-size:17.4px;color:#3f7c5f;line-height:30px;height:30px;font-weight:700;transform:scaleY(1.15);transform-origin:0 21.03px;">Downtown Arena</div>
<div class="abs" style="left:1795px;top:1176.5px;width:73px;height:32.0px;background:#e6f9fc;border-radius:8px;"></div>
<svg style="left:1806.5px;top:1182.0px" width="20" height="21" viewBox="0 0 20 21" fill="none" stroke="#6cc5d4" stroke-width="1.8" stroke-linejoin="round"><path d="M12 1.5 L2 12 H9 L6 20 L18.5 8 H11.5 Z"/></svg>
<div class="t" style="left:1832.50px;top:1177.75px;font-size:16.3px;color:#68c4d3;line-height:30px;height:30px;transform:scaleY(1.05);transform-origin:0 20.65px;-webkit-text-stroke:0.5px #68c4d3;">Fix</div>
<div class="t" style="left:1215.50px;top:1216.88px;font-size:19.1px;color:#1a1a1a;line-height:30px;height:30px;font-weight:700;letter-spacing:0.0254px;transform:scaleY(1.13);transform-origin:0 21.62px;">VIP upgrade pricing not in knowledge base — agents answering</div>
<div class="t" style="left:1215.50px;top:1243.18px;font-size:19.1px;color:#1a1a1a;line-height:30px;height:30px;font-weight:700;transform:scaleY(1.13);transform-origin:0 21.62px;">manually</div>
<div class="t" style="left:1215.50px;top:1272.41px;font-size:19px;color:#2e2e2e;line-height:30px;height:30px;letter-spacing:-0.15px;-webkit-text-stroke:0.2px #2e2e2e;">6 questions</div>
</body></html>
